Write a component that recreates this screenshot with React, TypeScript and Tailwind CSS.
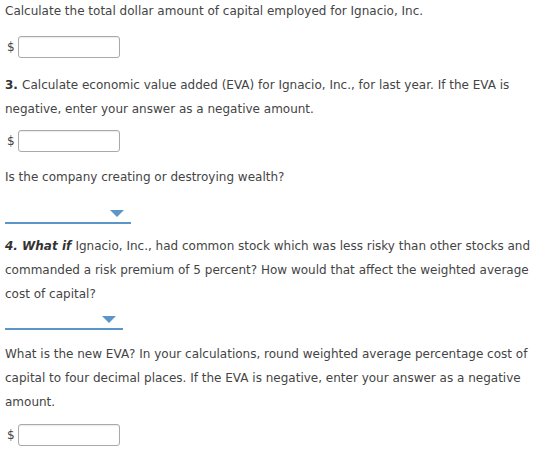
import React from 'react';

function MoneyInput({ className = '' }: { className?: string }) {
  return (
    <div className={`flex items-center gap-[3px] pl-[7px] ${className}`}>
      <span className="text-[12px] leading-none">$</span>
      <div className="h-[22px] w-[102px] rounded-[3px] border border-[#a9a9a9] bg-white shadow-[inset_0_1px_1px_rgba(0,0,0,0.08)]" />
    </div>
  );
}

function Dropdown({ width, className = '' }: { width: number; className?: string }) {
  return (
    <div className={`relative h-[16px] border-b-2 border-[#5b96c8] ml-[5px] ${className}`} style={{ width }}>
      <div className="absolute right-[7px] top-[2px] h-0 w-0 border-x-[7px] border-t-[7px] border-x-transparent border-t-[#5b96c8]" />
    </div>
  );
}

export default function App() {
  return (
    <div
      className="bg-white text-[#444] text-[12px] leading-[24px] w-[554px] h-[465px] overflow-hidden"
      style={{ fontFamily: '"DejaVu Sans", Verdana, sans-serif' }}
    >
      <p className="px-[5px] -mt-[1px]">Calculate the total dollar amount of capital employed for Ignacio, Inc.</p>
      <MoneyInput className="mt-[13px]" />

      <p className="px-[5px] mt-[15px]">
        <span className="font-bold text-[#333]">3. </span>Calculate economic value added (EVA) for Ignacio, Inc., for
        last year. If the EVA is negative, enter your answer as a negative amount.
      </p>
      <MoneyInput className="mt-[9px]" />

      <p className="px-[5px] mt-[13px]">Is the company creating or destroying wealth?</p>
      <Dropdown width={126} className="mt-[19px]" />

      <p className="px-[5px] mt-[10px]">
        <span className="font-bold italic text-[#333]">4. What if </span>Ignacio, Inc., had common stock which was less
        risky than other stocks and commanded a risk premium of 5 percent? How would that affect the weighted average
        cost of capital?
      </p>
      <Dropdown width={118} className="mt-[8px]" />

      <p className="px-[5px] mt-[12px]">
        What is the new EVA? In your calculations, round weighted average percentage cost of capital to four decimal
        places. If the EVA is negative, enter your answer as a negative amount.
      </p>
      <MoneyInput className="mt-[10px]" />
    </div>
  );
}
